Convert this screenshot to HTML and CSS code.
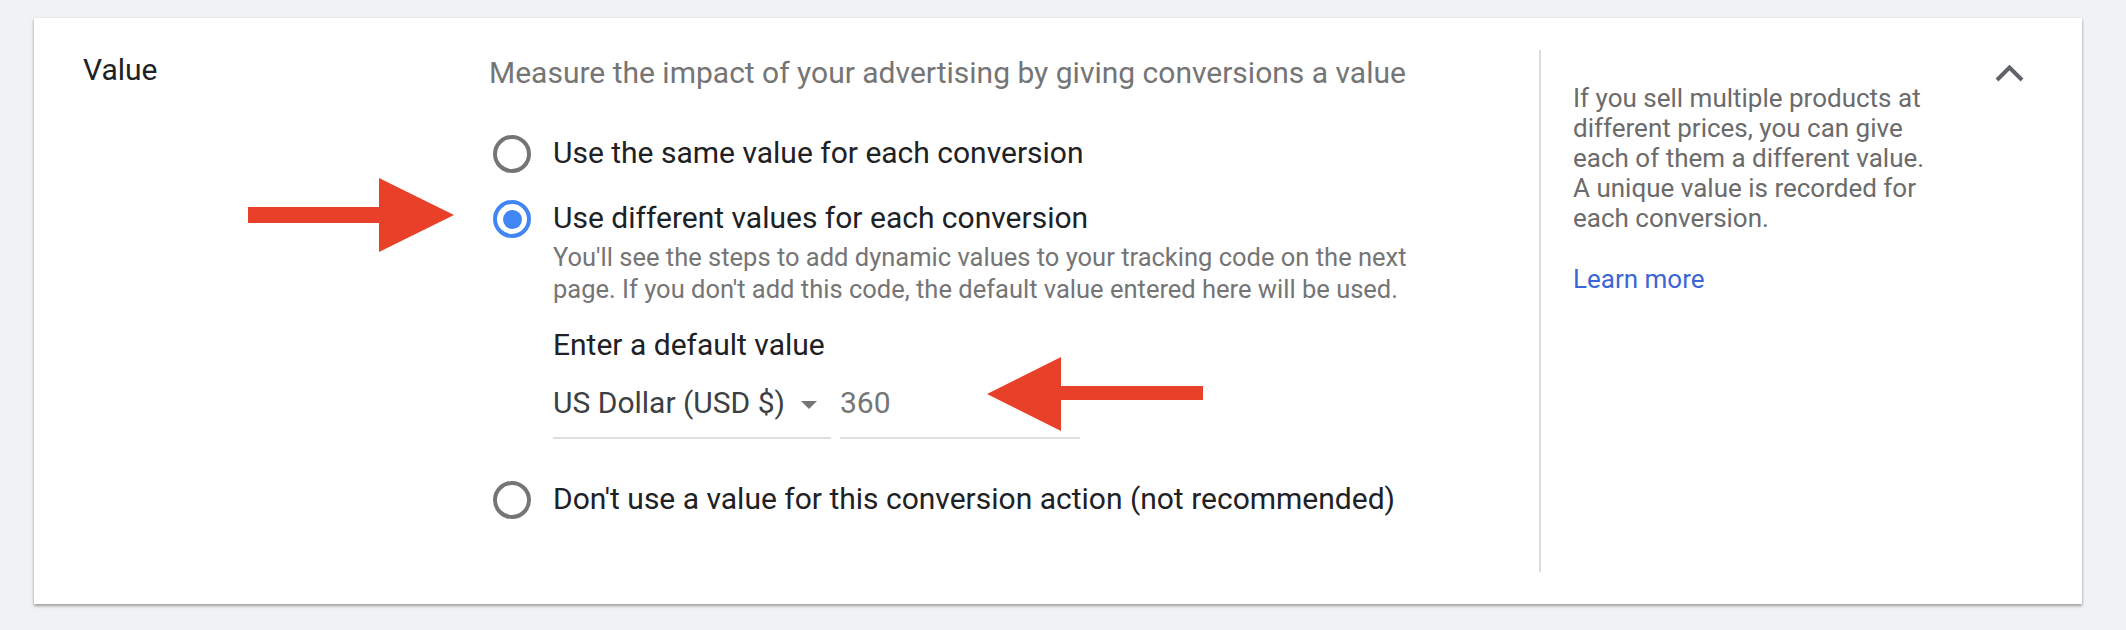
FILE: index.html
```html
<!DOCTYPE html>
<html lang="en">
<head>
<meta charset="utf-8">
<title>Value</title>
<link rel="stylesheet" href="styles.css">
</head>
<body>
<section class="card">
  <div class="label-col">Value</div>
  <div class="main-col">
    <p class="desc">Measure the impact of your advertising by giving conversions a value</p>
    <div class="option first">
      <span class="radio"></span>
      <div class="option-body">
        <div class="option-label">Use the same value for each conversion</div>
      </div>
    </div>
    <div class="option second">
      <span class="radio checked"></span>
      <div class="option-body">
        <div class="option-label">Use different values for each conversion</div>
        <p class="helper">You'll see the steps to add dynamic values to your tracking code on the next page. If you don't add this code, the default value entered here will be used.</p>
        <div class="field-title">Enter a default value</div>
        <div class="fields">
          <div class="select-field">
            <span>US Dollar (USD $)</span>
            <span class="caret"></span>
          </div>
          <div class="number-field">360</div>
        </div>
      </div>
    </div>
    <div class="option third">
      <span class="radio"></span>
      <div class="option-body">
        <div class="option-label">Don't use a value for this conversion action (not recommended)</div>
      </div>
    </div>
  </div>
  <aside class="side-col">
    <p class="side-text">If you sell multiple products at different prices, you can give each of them a different value. A unique value is recorded for each conversion.</p>
    <a class="learn" href="#">Learn more</a>
  </aside>
  <div class="chevron-col">
    <svg class="chevron" width="29" height="17" viewBox="0 0 29 17"><polyline points="2,15 14.5,2.5 27,15" fill="none" stroke="#5f6368" stroke-width="4"/></svg>
  </div>
  <svg class="arrow arrow-right" width="206" height="74" viewBox="0 0 206 74"><path d="M0,29 H131 V0 L206,37 L131,74 V45 H0 Z" fill="#e94129"/></svg>
  <svg class="arrow arrow-left" width="216" height="74" viewBox="0 0 216 74"><path d="M0,37 L74,0 V29 H216 V43 H74 V74 Z" fill="#e94129"/></svg>
</section>
</body>
</html>
```

FILE: styles.css
```css
html, body {
  margin: 0;
  padding: 0;
}
body {
  background: #f1f2f4;
  font-family: Roboto, "Liberation Sans", Arial, sans-serif;
  color: #202124;
  width: 2126px;
  height: 630px;
  overflow: hidden;
}
.card {
  position: relative;
  box-sizing: border-box;
  margin: 18px 0 0 34px;
  width: 2048px;
  height: 586px;
  background: #fff;
  box-shadow: 0 2px 3px rgba(0, 0, 0, 0.35), 0 0 2px rgba(0, 0, 0, 0.08);
  display: flex;
  padding: 32px 0 32px 49px;
}
.label-col {
  width: 406px;
  flex: none;
  font-size: 30px;
  line-height: 40px;
}
.main-col {
  width: 1050px;
  flex: none;
}
.desc {
  margin: 3px 0 0;
  font-size: 30px;
  line-height: 40px;
  color: #757575;
}
.option {
  display: flex;
  gap: 22px;
}
.option.first { margin-top: 40px; }
.option.second { margin-top: 25px; }
.option.third { margin-top: 40px; }
.radio {
  flex: none;
  box-sizing: border-box;
  width: 38px;
  height: 38px;
  margin: 2px 0 0 4px;
  border: 4px solid #757575;
  border-radius: 50%;
  display: flex;
  align-items: center;
  justify-content: center;
}
.radio.checked {
  border-color: #4285f4;
}
.radio.checked::after {
  content: "";
  width: 19px;
  height: 19px;
  border-radius: 50%;
  background: #4285f4;
}
.option-label {
  font-size: 30px;
  line-height: 40px;
}
.helper {
  margin: 3px 0 0;
  font-size: 25.5px;
  line-height: 32px;
  color: #757575;
  width: 890px;
}
.field-title {
  margin-top: 20px;
  font-size: 30px;
  line-height: 40px;
}
.fields {
  display: flex;
  gap: 9px;
  margin-top: 18px;
}
.select-field,
.number-field {
  box-sizing: border-box;
  font-size: 30px;
  line-height: 40px;
  padding-bottom: 14px;
  border-bottom: 2px solid #e0e0e0;
}
.select-field {
  width: 278px;
  display: flex;
  align-items: center;
  gap: 16px;
  color: #3c4043;
}
.caret {
  width: 0;
  height: 0;
  border-left: 8px solid transparent;
  border-right: 8px solid transparent;
  border-top: 8px solid #757575;
  margin-top: 4px;
}
.number-field {
  width: 240px;
  color: #757575;
}
.side-col {
  flex: none;
  width: 380px;
  border-left: 2px solid #dadce0;
  padding-left: 32px;
}
.side-text {
  margin: 33px 0 0;
  font-size: 26px;
  line-height: 30px;
  color: #6b6b6b;
  width: 362px;
}
.learn {
  display: inline-block;
  margin-top: 31px;
  font-size: 26px;
  line-height: 30px;
  color: #3b67d6;
  text-decoration: none;
}
.chevron-col {
  margin-left: auto;
  padding: 15px 58px 0 0;
}
.chevron {
  display: block;
}
.arrow {
  position: absolute;
}
.arrow-right {
  left: 214px;
  top: 160px;
}
.arrow-left {
  left: 953px;
  top: 339px;
}
```
